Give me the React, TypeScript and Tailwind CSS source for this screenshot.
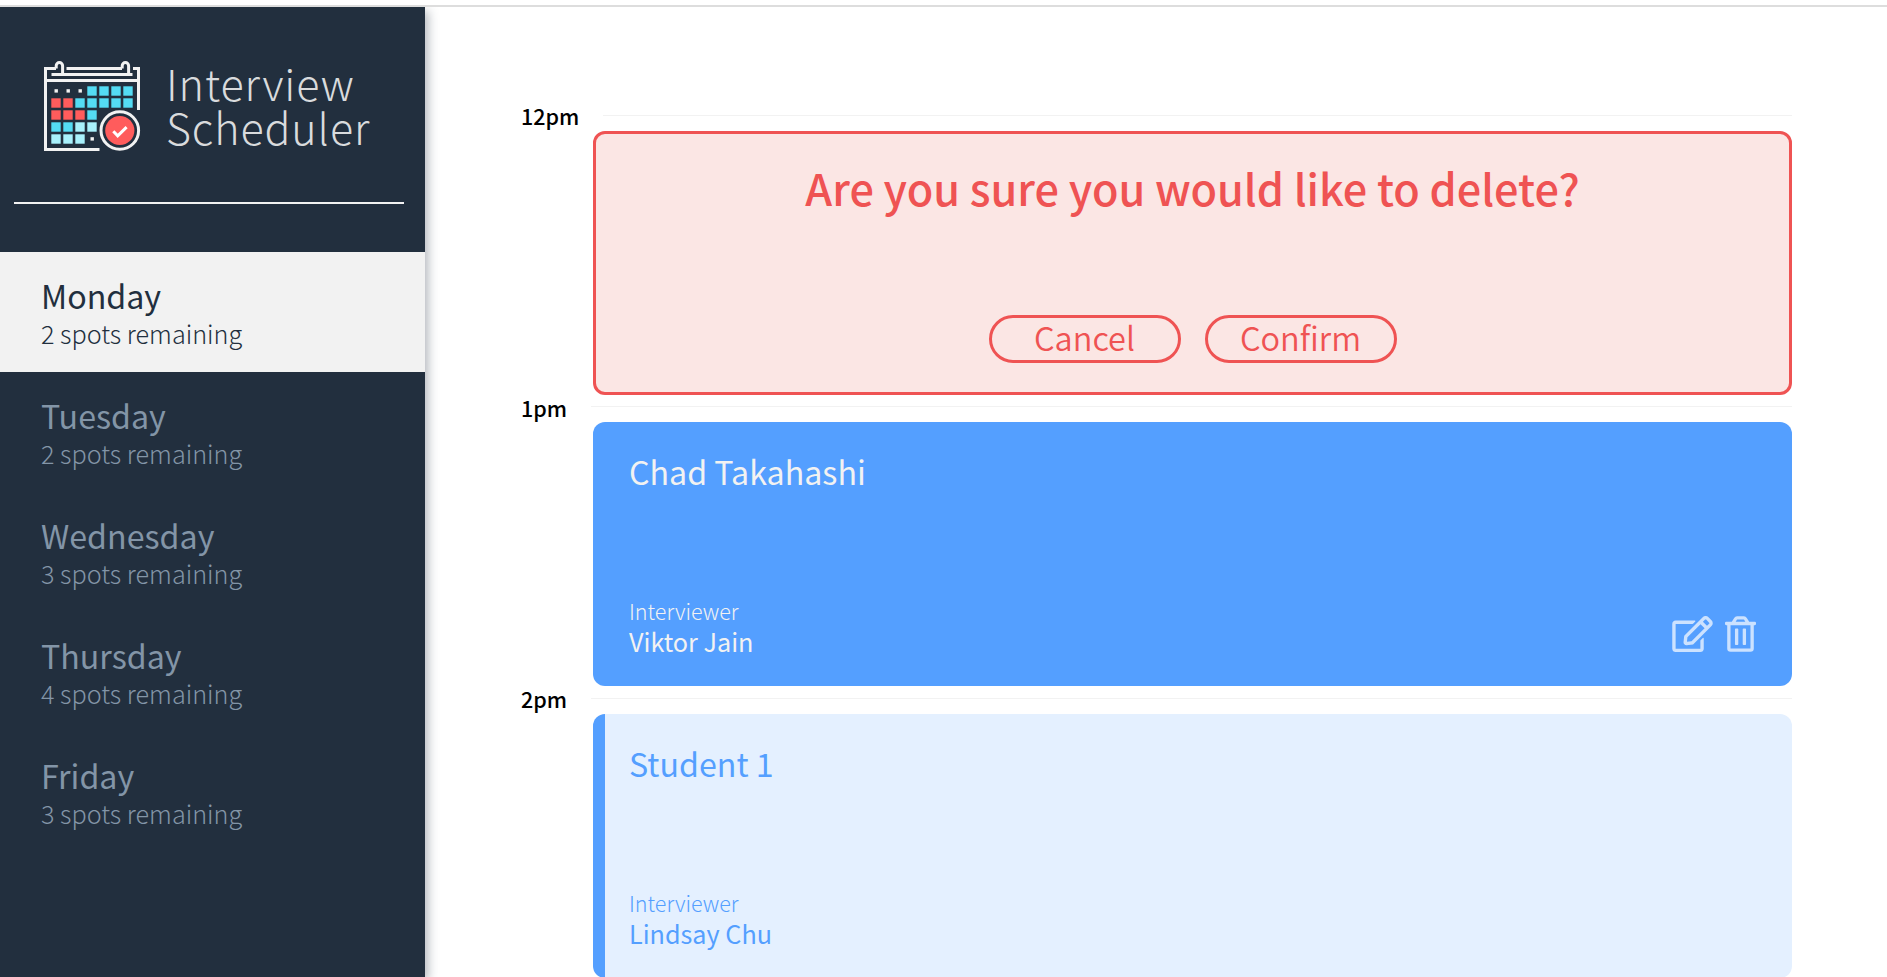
import React from "react";

const CYAN = "#54dcf4";
const RED = "#ff5c5c";
const ICE = "#a9f1fc";

const CELLS: [number, number, string][] = [
  [3, 0, CYAN], [4, 0, CYAN], [5, 0, CYAN], [6, 0, CYAN],
  [0, 1, RED], [1, 1, RED], [2, 1, CYAN], [3, 1, CYAN], [4, 1, CYAN], [5, 1, CYAN], [6, 1, CYAN],
  [0, 2, RED], [1, 2, RED], [2, 2, RED], [3, 2, CYAN],
  [0, 3, CYAN], [1, 3, CYAN], [2, 3, ICE], [3, 3, ICE],
  [0, 4, ICE], [1, 4, ICE], [2, 4, ICE],
];

const DOTS: [number, number][] = [[0, 0], [1, 0], [2, 0], [3, 4]];

function CalendarLogo() {
  return (
    <svg width="98" height="92" viewBox="0 0 98 92" fill="none" className="shrink-0">
      <g stroke="#f2f2f2" strokeWidth="3">
        <path d="M12 8.500H1.500V89.500H55.500" />
        <path d="M89 8.500h5.500V50" />
        <path d="M1 20.500H95" />
        <path d="M7.500 14.500H88.500" />
        <path d="M22.500 8.500H78" />
        <path d="M12.200 8.500V5.800a3.200 3.200 0 0 1 6.400 0V14" />
        <path d="M78.200 8.500V5.800a3.200 3.200 0 0 1 6.400 0V14" />
        <circle cx="75.8" cy="70.5" r="18.800" />
      </g>
      {CELLS.map(([c, r, fill]) => (
        <rect key={`${c}-${r}`} x={7.3 + c * 12} y={26.3 + r * 12} width="9.4" height="9.4" fill={fill} />
      ))}
      {DOTS.map(([c, r]) => (
        <rect key={`${c}-${r}`} x={10.5 + c * 12} y={29.2 + r * 12} width="3.4" height="3.4" fill="#f2f2f2" />
      ))}
      <circle cx="75.8" cy="70.5" r="14.6" fill={RED} />
      <path d="M69.3 71.2l4.400 4.600 8.900-8.600" stroke="#fff" strokeWidth="3" />
    </svg>
  );
}

function EditIcon() {
  return (
    <svg width="41" height="36" viewBox="0 0 576 512" fill="currentColor">
      <path d="M402.3 344.9l32-32c5-5 13.700-1.500 13.700 5.700V464c0 26.500-21.500 48-48 48H48c-26.500 0-48-21.500-48-48V112c0-26.500 21.500-48 48-48h273.500c7.100 0 10.700 8.600 5.700 13.700l-32 32c-1.500 1.500-3.500 2.300-5.700 2.300H48v352h352V350.500c0-2.100.8-4.100 2.300-5.600zm156.600-201.800L296.300 405.700l-90.400 10c-26.200 2.900-48.500-19.200-45.600-45.600l10-90.400L432.900 17.100c22.900-22.900 59.900-22.900 82.700 0l43.200 43.200c22.900 22.900 22.900 60 .1 82.800zM460.100 174L402 115.900 216.200 301.800l-7.300 65.300 65.300-7.300L460.100 174zm64.800-79.700l-43.200-43.200c-4.100-4.100-10.800-4.100-14.800 0L436 82l58.100 58.100 30.900-30.900c4-4.200 4-10.800-.1-14.900z" />
    </svg>
  );
}

function TrashIcon() {
  return (
    <svg width="31" height="36" viewBox="0 0 448 512" fill="currentColor">
      <path d="M268 416h24a12 12 0 0 0 12-12V188a12 12 0 0 0-12-12h-24a12 12 0 0 0-12 12v216a12 12 0 0 0 12 12zM432 80h-82.410l-34-56.700A48 48 0 0 0 274.410 0H173.590a48 48 0 0 0-41.160 23.300L98.410 80H16A16 16 0 0 0 0 96v16a16 16 0 0 0 16 16h16v336a48 48 0 0 0 48 48h288a48 48 0 0 0 48-48V128h16a16 16 0 0 0 16-16V96a16 16 0 0 0-16-16zM171.840 50.910A6 6 0 0 1 177 48h94a6 6 0 0 1 5.150 2.910L293.610 80H154.390zM368 464H80V128h288zm-212-48h24a12 12 0 0 0 12-12V188a12 12 0 0 0-12-12h-24a12 12 0 0 0-12 12v216a12 12 0 0 0 12 12z" />
    </svg>
  );
}

const DAYS = [
  { name: "Monday", spots: 2 },
  { name: "Tuesday", spots: 2 },
  { name: "Wednesday", spots: 3 },
  { name: "Thursday", spots: 4 },
  { name: "Friday", spots: 3 },
];

function DayItem({ name, spots, selected }: { name: string; spots: number; selected: boolean }) {
  return (
    <li
      className={
        selected
          ? "flex h-[120px] flex-col bg-[#f2f2f2] pt-[23px] pl-[41px] text-[#222f3e]"
          : "flex h-[120px] flex-col pt-[23px] pl-[41px] text-[#8395a7]"
      }
    >
      <h2 className="text-[32.2px] leading-[41px] font-normal">{name}</h2>
      <h3 className="text-[25.2px] leading-[34px] font-light">{spots} spots remaining</h3>
    </li>
  );
}

function Slot({ time, children }: { time: string; children: React.ReactNode }) {
  return (
    <article className="flex h-[291.67px] flex-col">
      <header className="flex h-[27px] shrink-0 items-center">
        <h4 className="shrink-0 pt-[1.5px] pr-[24px] text-[21.5px] leading-[24px] font-medium text-black">{time}</h4>
        <hr className="flex-1 border-[#f2f2f2]" />
      </header>
      <div className="mt-[2px] ml-[72px] h-[264px] shrink-0">{children}</div>
    </article>
  );
}

function Interviewer({ name }: { name: string }) {
  return (
    <div>
      <h4 className="text-[21.5px] leading-[30px] font-light">Interviewer</h4>
      <h3 className="text-[25.2px] leading-[30px] font-normal">{name}</h3>
    </div>
  );
}

export default function App() {
  return (
    <div className="flex h-[977px] w-[1887px] flex-col overflow-hidden bg-white font-['Noto_Sans_CJK_SC',sans-serif]">
      <div className="h-[7px] shrink-0 border-b-2 border-[#dddddd]" />
      <main className="flex min-h-0 flex-1 overflow-hidden">
        <section className="w-[425px] shrink-0 bg-[#222f3e] shadow-[3px_4px_10px_rgba(34,47,62,0.35)]">
          <div className="flex h-[195px] items-start pt-[53px] pl-[44px]">
            <CalendarLogo />
            <div className="pt-[1px] pl-[24px] text-[43px] leading-[43.5px] font-light tracking-[0.9px] text-[#d9dbdd]">
              <p>Interview</p>
              <p>Scheduler</p>
            </div>
          </div>
          <hr className="mr-[21px] ml-[14px] border-t-2 border-[#f2f2f2]" />
          <ul className="mt-[48px]">
            {DAYS.map((day) => (
              <DayItem key={day.name} {...day} selected={day.name === "Monday"} />
            ))}
          </ul>
        </section>
        <section className="flex-1 pt-[94.67px] pr-[95px] pl-[96px]">
          <Slot time="12pm">
            <div className="flex h-full flex-col items-center justify-between rounded-[12px] border-3 border-[#ef5353] bg-[#fbe6e4] pt-[23.5px] pb-[29px] text-[#ef5353]">
              <h1 className="text-[43.2px] leading-[60px] font-medium">Are you sure you would like to delete?</h1>
              <div className="flex gap-[24px]">
                <button className="h-[48px] w-[192px] rounded-full border-3 border-[#ef5353] pb-[5px] text-[32.5px] leading-[37px] font-[350]">Cancel</button>
                <button className="h-[48px] w-[192px] rounded-full border-3 border-[#ef5353] pb-[5px] text-[32.5px] leading-[37px] font-[350]">Confirm</button>
              </div>
            </div>
          </Slot>
          <Slot time="1pm">
            <div className="flex h-full justify-between rounded-[12px] bg-[#549fff] pt-[28.3px] pr-[36px] pb-[30px] pl-[36px] text-[#f2f2f2]">
              <div className="flex flex-col justify-between">
                <h2 className="text-[32.2px] leading-[40px] font-normal">Chad Takahashi</h2>
                <Interviewer name="Viktor Jain" />
              </div>
              <div className="mb-[4px] flex gap-[12px] self-end text-[#cce2ff]">
                <EditIcon />
                <TrashIcon />
              </div>
            </div>
          </Slot>
          <Slot time="2pm">
            <div className="flex h-full flex-col justify-between overflow-hidden rounded-[12px] border-l-12 border-[#549fff] bg-[#e4f0ff] pt-[28.600px] pb-[29.5px] pl-[24px] text-[#549fff]">
              <h2 className="text-[32.2px] leading-[40px] font-normal">Student 1</h2>
              <Interviewer name="Lindsay Chu" />
            </div>
          </Slot>
        </section>
      </main>
    </div>
  );
}
